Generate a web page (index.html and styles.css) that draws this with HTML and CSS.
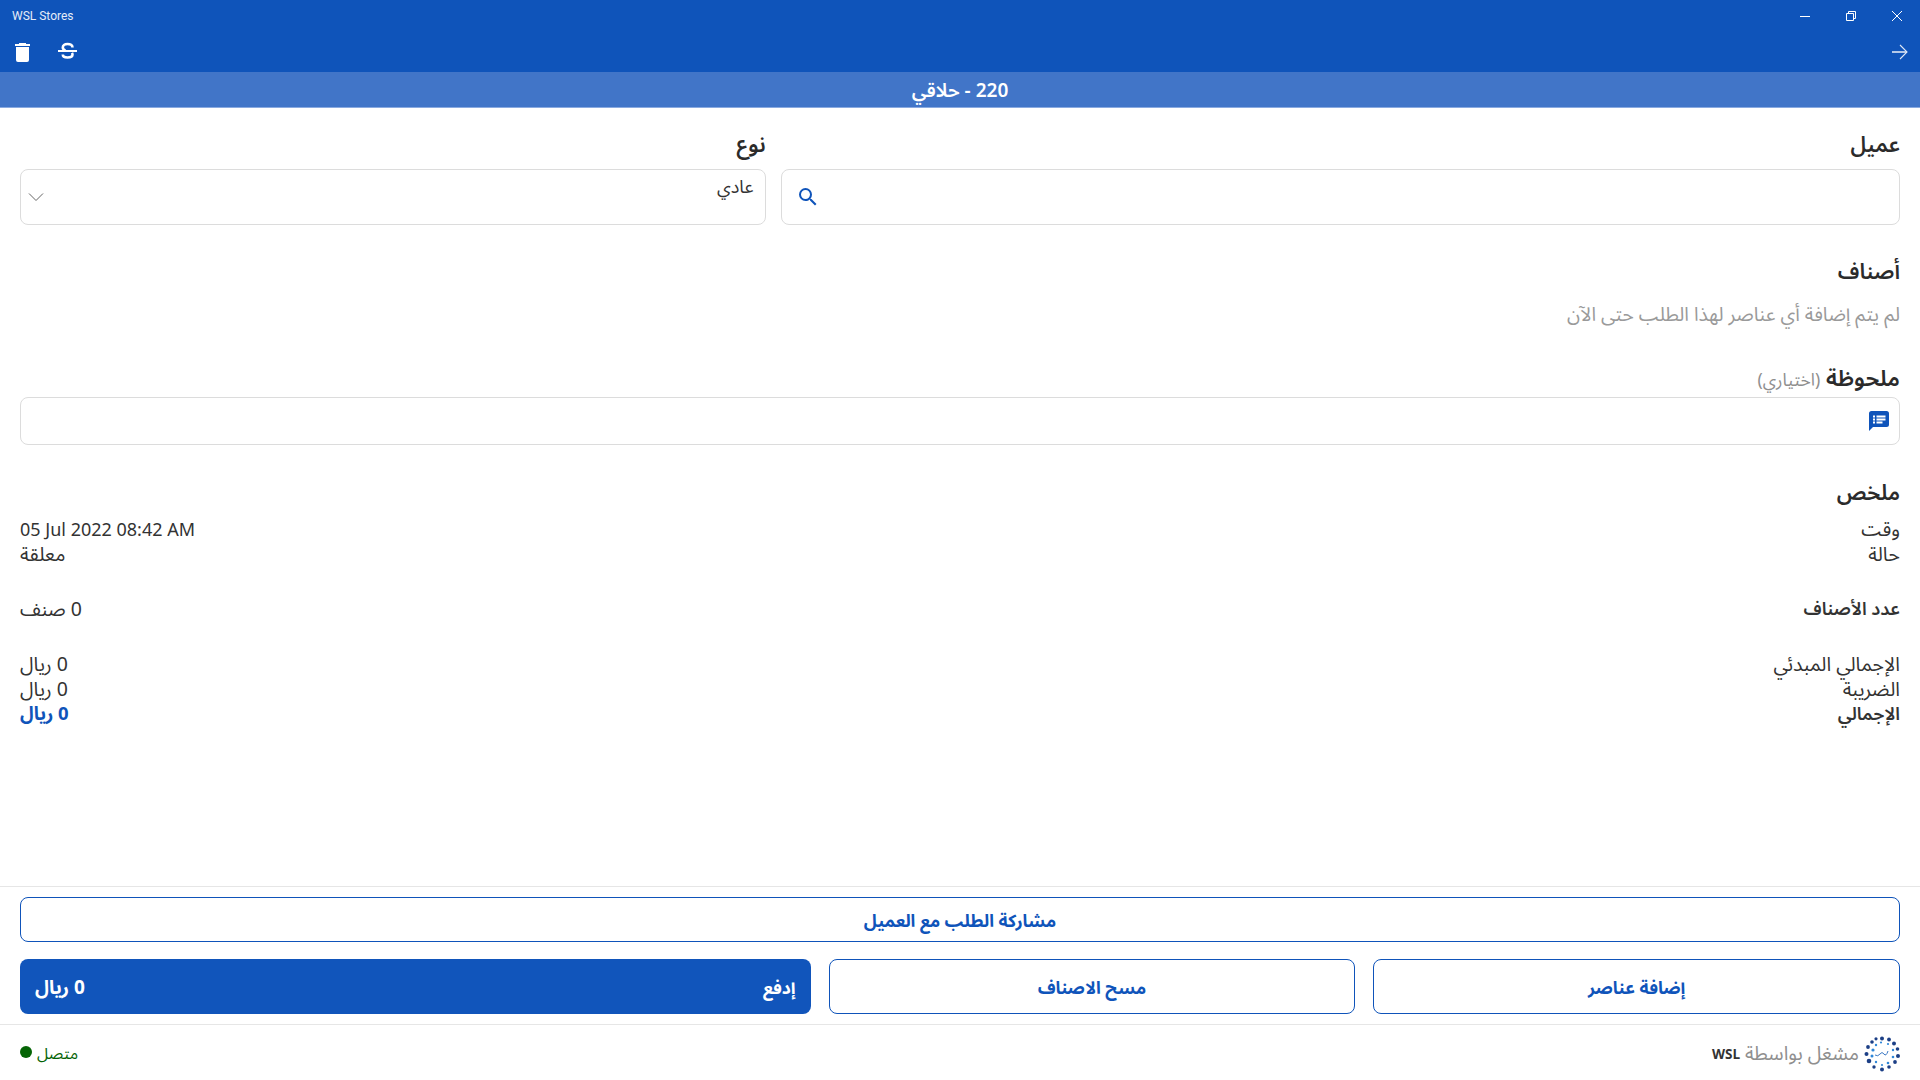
FILE: index.html
```html
<!DOCTYPE html>
<html lang="ar" dir="rtl">
<head>
<meta charset="utf-8">
<title>WSL Stores</title>
<link rel="stylesheet" href="styles.css">
</head>
<body>
<div class="app">
  <header class="chrome">
    <div class="titlebar" dir="ltr">
      <span class="app-name">WSL Stores</span>
      <div class="win-controls">
        <svg class="win-icon" viewBox="0 0 46 32"><path d="M18 16.500h10" stroke="#fff" fill="none"/></svg>
        <svg class="win-icon" viewBox="0 0 46 32"><path d="M18.500 13.500h7v7h-7zM20.500 13.500v-2h7v7h-2" stroke="#fff" fill="none"/></svg>
        <svg class="win-icon" viewBox="0 0 46 32"><path d="M18 11l10 10M28 11L18 21" stroke="#fff" fill="none"/></svg>
      </div>
    </div>
    <div class="toolbar" dir="ltr">
      <div class="tool-group">
        <svg class="tool-icon" viewBox="0 0 24 24"><path d="M8 4h7v1h4v2H4V5h4zM5 8h13v13q0 2-2 2H7q-2 0-2-2z" fill="#fff"/></svg>
        <svg class="tool-icon" viewBox="0 0 24 24"><path d="M3 12h19" stroke="#fff" stroke-width="2" fill="none"/><path d="M17.500 8.500C17.500 6 15.500 5 12.500 5S7.800 6.500 7.800 8.500 9 11 10.500 11.500M7.800 15.500c0 2 2 3 4.700 3s5-1 5-3c0-.6-.2-1.200-.5-1.700" stroke="#fff" stroke-width="2.600" fill="none"/></svg>
      </div>
      <svg class="back-icon" viewBox="0 0 18 18"><path d="M1 9h15" stroke="#c7d6ee" stroke-width="1.800" fill="none"/><path d="M9 2l7 7-7 7" stroke="#dfe8f6" stroke-width="1.100" fill="none"/></svg>
    </div>
    <div class="order-strip">220 - حلاقي</div>
  </header>

  <main class="content">
    <div class="field-row">
      <div class="field field-customer">
        <label class="field-label">عميل</label>
        <div class="box box-tall box-search">
          <svg class="search-icon" viewBox="0 0 24 24"><path d="M15.500 14h-.79l-.28-.27A6.471 6.471 0 0 0 16 9.500 6.500 6.500 0 1 0 9.500 16c1.610 0 3.090-.59 4.230-1.570l.27.28v.79l5 4.990L20.490 19l-4.990-5zm-6 0C7.010 14 5 11.990 5 9.500S7.010 5 9.500 5 14 7.010 14 9.500 11.990 14 9.500 14z" fill="#0f54ba"/></svg>
        </div>
      </div>
      <div class="field field-type">
        <label class="field-label">نوع</label>
        <div class="box box-tall box-select">
          <span class="select-value">عادي</span>
          <svg class="chevron" viewBox="0 0 16 10"><path d="M1 1.500l7 7 7-7" stroke="#666" stroke-width="1" fill="none"/></svg>
        </div>
      </div>
    </div>

    <section class="items">
      <h2 class="section-title">أصناف</h2>
      <p class="muted-line">لم يتم إضافة أي عناصر لهذا الطلب حتى الآن</p>
    </section>

    <section class="note">
      <h2 class="section-title note-title">ملحوظة <span class="optional">(اختياري)</span></h2>
      <div class="box box-note">
        <svg class="note-icon" viewBox="0 0 20 20"><path d="M2.500 0h15Q20 0 20 2.500v11q0 2.500-2.500 2.500H4l-4 4V2.500Q0 0 2.500 0z" fill="#0f54ba"/><path d="M4 4.500h2v2H4zM4 7.500h2v2H4zM4 10.500h2v2H4zM7.500 4.500h9v2h-9zM7.500 7.500h9v2h-9zM7.500 10.500h6v2h-6z" fill="#fff"/></svg>
      </div>
    </section>

    <section class="summary">
      <h2 class="section-title">ملخص</h2>
      <div class="summary-group">
        <div class="sum-row"><span>وقت</span><span class="date" dir="ltr">05 Jul 2022 08:42 AM</span></div>
        <div class="sum-row"><span>حالة</span><span>معلقة</span></div>
      </div>
      <div class="summary-group">
        <div class="sum-row"><span class="strong">عدد الأصناف</span><span>0 صنف</span></div>
      </div>
      <div class="summary-group">
        <div class="sum-row"><span>الإجمالي المبدئي</span><span>0 ريال</span></div>
        <div class="sum-row"><span>الضريبة</span><span>0 ريال</span></div>
        <div class="sum-row"><span class="strong">الإجمالي</span><span class="total">0 ريال</span></div>
      </div>
    </section>
  </main>

  <section class="actions">
    <button class="btn btn-share">مشاركة الطلب مع العميل</button>
    <div class="action-row">
      <button class="btn btn-main">إضافة عناصر</button>
      <button class="btn btn-main">مسح الاصناف</button>
      <button class="btn btn-pay"><span>إدفع</span><span class="pay-amount">0 ريال</span></button>
    </div>
  </section>

  <footer class="footer">
    <div class="brand">
      <svg class="logo" viewBox="0 0 36 36">
        <g fill="#1c3f86"><circle cx="18" cy="2.500" r="2"/><circle cx="25" cy="3.500" r="1.900"/><circle cx="30" cy="7.500" r="2"/><circle cx="33.500" cy="13" r="1.800"/><circle cx="34" cy="20" r="2"/><circle cx="31" cy="26" r="1.900"/><circle cx="25" cy="31" r="1.800"/><circle cx="18" cy="33.500" r="2"/><circle cx="10" cy="31" r="1.700"/><circle cx="5" cy="25" r="2.300"/><circle cx="2.500" cy="18" r="2"/><circle cx="4" cy="11" r="1.900"/><circle cx="8" cy="6" r="1.800"/><circle cx="12" cy="2.800" r="1.600"/></g>
        <g fill="#2f87d8"><circle cx="9" cy="14" r="1.600"/><circle cx="8" cy="20" r="1.500"/><circle cx="12" cy="26" r="1.200"/><circle cx="18" cy="29" r="1.100"/><circle cx="24" cy="27" r="1.300"/><circle cx="29" cy="21" r="1.300"/><circle cx="29" cy="14" r="1.200"/><circle cx="24" cy="8" r="1.100"/><circle cx="17" cy="6.500" r="1.100"/><circle cx="12" cy="9" r="1.200"/></g>
        <path d="M11 19q3 2 5-1t4 0 4-3" stroke="#3a78c4" stroke-width="1" fill="none"/>
      </svg>
      <span class="brand-text">مشغل بواسطة</span>
      <span class="brand-name">WSL</span>
    </div>
    <div class="status"><span class="status-text">متصل</span><span class="status-dot"></span></div>
  </footer>
</div>
</body>
</html>
```

FILE: styles.css
```css
* { box-sizing: border-box; }
html, body { margin: 0; height: 100%; background: #fff; }
body {
  font-family: "Noto Sans Arabic", "Segoe UI", "DejaVu Sans", "Noto Sans", sans-serif;
  color: #333;
  overflow: hidden;
}
.app { height: 1080px; display: flex; flex-direction: column; }

.chrome { flex: none; }
.titlebar {
  height: 32px;
  background: #0f54ba;
  color: #e4ecf8;
  display: flex;
  align-items: center;
  justify-content: space-between;
  padding-left: 12px;
}
.app-name { font: 12px Roboto, "Liberation Sans", sans-serif; }
.win-controls { display: flex; }
.win-icon { width: 46px; height: 32px; display: block; }
.toolbar {
  height: 40px;
  background: #0f54ba;
  display: flex;
  align-items: center;
  justify-content: space-between;
  padding: 0 11px;
}
.tool-group { display: flex; gap: 20px; margin-top: -2px; }
.tool-icon { width: 24px; height: 24px; display: block; }
.back-icon { width: 18px; height: 18px; display: block; }
.order-strip {
  height: 36px;
  background: #4175c8;
  border-bottom: 1px solid #8aaae0;
  color: #fff;
  text-align: center;
  font-size: 19px;
  font-weight: 600;
  line-height: 38px;
}

.content { flex: 1; padding: 19px 20px 0; min-height: 0; }
.field-row { display: flex; gap: 15px; }
.field { display: flex; flex-direction: column; }
.field-customer { flex: 1120; }
.field-type { flex: 746; }
.field-label, .section-title {
  font-size: 21.500px;
  font-weight: 600;
  color: #2b2b2b;
  line-height: 34px;
  margin: 0;
}
.field-label { height: 42px; line-height: 36px; }
.box {
  border: 1.500px solid #dcdcdc;
  border-radius: 8px;
  background: #fff;
  display: flex;
}
.box-tall { height: 56px; }
.box-search { justify-content: flex-end; align-items: center; padding-left: 14px; }
.search-icon { width: 24px; height: 24px; }
.box-select { justify-content: space-between; padding: 0 11px 0 7px; align-items: center; }
.select-value { font-size: 18px; align-self: flex-start; line-height: 34px; }
.chevron { width: 16px; height: 10px; }

.items { margin-top: 30px; }
.muted-line { margin: 9px 0 0; font-size: 19.300px; color: #9a9a9a; line-height: 34px; }
.note { margin-top: 23px; }
.note-title { font-size: 22.500px; height: 42px; padding-top: 7px; }
.optional { font-size: 17.500px; font-weight: 400; color: #8f8f8f; }
.box-note { height: 48px; align-items: center; padding: 0 10px; }
.note-icon { width: 20px; height: 20px; }

.summary { margin-top: 31px; }
.summary-group { margin-bottom: 30px; }
.summary .section-title { margin-bottom: 7px; }
.sum-row {
  display: flex;
  justify-content: space-between;
  font-size: 19.500px;
  line-height: 25px;
  height: 25px;
}
.date { font-size: 18px; line-height: 27px; }
.strong { font-weight: 600; font-size: 18px; }
.total { font-weight: 700; font-size: 18.500px; color: #0f54ba; }

.actions {
  flex: none;
  border-top: 1.500px solid #e6e6e6;
  border-bottom: 1.500px solid #e6e6e6;
  padding: 10px 20px;
  height: 139px;
  display: flex;
  flex-direction: column;
  gap: 17px;
}
.btn {
  font-family: inherit;
  font-size: 17.500px;
  font-weight: 700;
  border-radius: 8px;
  cursor: pointer;
  padding: 3px 0 0;
}
.btn-share { height: 45px; background: #fff; color: #0f54ba; border: 1.500px solid #0f54ba; }
.action-row { display: grid; grid-template-columns: 527fr 527fr 791fr; gap: 18px; height: 55px; }
.btn-main { background: #fff; color: #0f54ba; border: 1.500px solid #0f54ba; }
.btn-pay {
  background: #1155bb;
  color: #fff;
  border: 0;
  display: flex;
  align-items: center;
  justify-content: space-between;
  padding: 3px 15px 0;
}
.pay-amount { font-size: 19px; }

.footer {
  flex: none;
  height: 55px;
  display: flex;
  align-items: center;
  justify-content: space-between;
  padding: 2px 20px 0;
}
.brand { display: flex; align-items: center; gap: 5px; }
.logo { width: 36px; height: 36px; }
.brand-text { font-size: 19.500px; color: #8f8f8f; }
.brand-name { font: 700 13.500px "Open Sans", "Liberation Sans", sans-serif; color: #333; }
.status { display: flex; align-items: center; gap: 5px; }
.status-text { font-size: 16px; color: #056405; }
.status-dot { width: 12px; height: 12px; border-radius: 50%; background: #056405; margin-top: -3px; }
```
